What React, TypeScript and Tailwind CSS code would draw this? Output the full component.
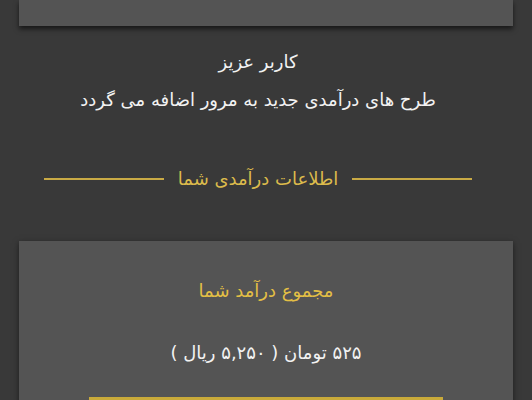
export default function App() {
  return (
    <div
      dir="rtl"
      className="w-full h-[400px] overflow-hidden bg-[#393939] text-white"
      style={{ fontFamily: '"DejaVu Sans", sans-serif' }}
    >
      <div className="mx-[19px] h-[26px] bg-[#545454] shadow-[0_3px_5px_rgba(0,0,0,0.6)]" />
      <div className="mt-[23px] pr-[16px] text-center text-[18px] leading-[26px] text-[#f2f2f2]">
        <div>کاربر عزیز</div>
        <div className="mt-[12px]">طرح های درآمدی جدید به مرور اضافه می گردد</div>
      </div>
      <div className="mt-[53px] pr-[16px] flex items-center justify-center gap-[14px]">
        <div className="w-[120px] h-[2px] bg-[#c9aa45]" />
        <div className="text-[18px] leading-[26px] text-[#dcbb4c]">اطلاعات درآمدی شما</div>
        <div className="w-[120px] h-[2px] bg-[#c9aa45]" />
      </div>
      <div className="mt-[49px] mx-[19px] bg-[#545454] shadow-[0_2px_6px_rgba(0,0,0,0.5)] pt-[37px] pb-[10px] flex flex-col items-center">
        <div className="text-[18px] leading-[26px] text-[#e3bf45]">مجموع درآمد شما</div>
        <div className="mt-[36px] text-[18px] leading-[26px] text-[#f2f2f2]">۵۲۵ تومان ( ۵,۲۵۰ ریال )</div>
        <div className="mt-[31px] w-[354px] h-[3px] bg-[#c9aa3a]" />
      </div>
    </div>
  );
}
